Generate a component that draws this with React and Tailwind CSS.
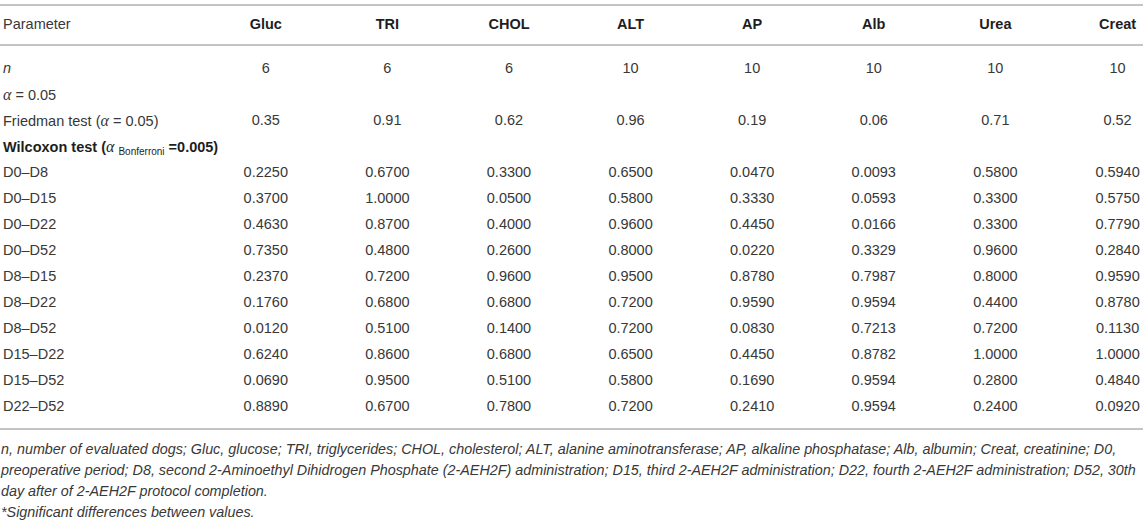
const cols = ['Gluc', 'TRI', 'CHOL', 'ALT', 'AP', 'Alb', 'Urea', 'Creat'];

const rows = [
  ['D0–D8', '0.2250', '0.6700', '0.3300', '0.6500', '0.0470', '0.0093', '0.5800', '0.5940'],
  ['D0–D15', '0.3700', '1.0000', '0.0500', '0.5800', '0.3330', '0.0593', '0.3300', '0.5750'],
  ['D0–D22', '0.4630', '0.8700', '0.4000', '0.9600', '0.4450', '0.0166', '0.3300', '0.7790'],
  ['D0–D52', '0.7350', '0.4800', '0.2600', '0.8000', '0.0220', '0.3329', '0.9600', '0.2840'],
  ['D8–D15', '0.2370', '0.7200', '0.9600', '0.9500', '0.8780', '0.7987', '0.8000', '0.9590'],
  ['D8–D22', '0.1760', '0.6800', '0.6800', '0.7200', '0.9590', '0.9594', '0.4400', '0.8780'],
  ['D8–D52', '0.0120', '0.5100', '0.1400', '0.7200', '0.0830', '0.7213', '0.7200', '0.1130'],
  ['D15–D22', '0.6240', '0.8600', '0.6800', '0.6500', '0.4450', '0.8782', '1.0000', '1.0000'],
  ['D15–D52', '0.0690', '0.9500', '0.5100', '0.5800', '0.1690', '0.9594', '0.2800', '0.4840'],
  ['D22–D52', '0.8890', '0.6700', '0.7800', '0.7200', '0.2410', '0.9594', '0.2400', '0.0920'],
];

function Row({ label, values }) {
  return (
    <div className="grid grid-cols-[205px_repeat(7,121.6px)_1fr] items-center h-[26px]">
      <div className="pl-[3px] whitespace-nowrap">{label}</div>
      {values.map((v, i) => (
        <div key={i} className={`text-center ${i === 7 ? 'pl-[36px]' : ''}`}>
          {v}
        </div>
      ))}
    </div>
  );
}

const empty = ['', '', '', '', '', '', '', ''];

export default function App() {
  return (
    <div className="w-[1146px] h-[521px] bg-white text-[#383838] text-[14.5px] font-['Liberation_Sans',Arial,sans-serif] overflow-hidden">
      <div className="w-[1143px] pt-[4px]">
        <div className="border-t-2 border-b-2 border-[#c4c4c4]">
          <div className="grid grid-cols-[205px_repeat(7,121.6px)_1fr] items-center h-[38px]">
            <div className="pl-[3px]">Parameter</div>
            {cols.map((c, i) => (
              <div key={c} className={`text-center font-bold text-[#1e1e1e] ${i === 7 ? 'pl-[36px]' : ''}`}>
                {c}
              </div>
            ))}
          </div>
        </div>
        <div className="pt-[10px] pb-[8px] border-b-2 border-[#c4c4c4]">
          <Row label={<i>n</i>} values={['6', '6', '6', '10', '10', '10', '10', '10']} />
          <Row
            label={
              <span>
                <i className="font-['Liberation_Serif',serif] text-[16px]">α</i> = 0.05
              </span>
            }
            values={empty}
          />
          <Row
            label={
              <span>
                Friedman test (<i className="font-['Liberation_Serif',serif] text-[16px]">α</i> = 0.05)
              </span>
            }
            values={['0.35', '0.91', '0.62', '0.96', '0.19', '0.06', '0.71', '0.52']}
          />
          <Row
            label={
              <span className="font-bold text-[#1e1e1e]">
                Wilcoxon test (<i className="font-['Liberation_Serif',serif] font-normal text-[16px]">α</i>{' '}
                <sub className="font-normal text-[10px]">Bonferroni</sub> =0.005)
              </span>
            }
            values={empty}
          />
          {rows.map((r) => (
            <Row key={r[0]} label={r[0]} values={r.slice(1)} />
          ))}
        </div>
        <div className="pt-[9px] pl-[1px] italic text-[14.35px] leading-[21px] text-[#383838]">
          <p>
            n, number of evaluated dogs; Gluc, glucose; TRI, triglycerides; CHOL, cholesterol; ALT, alanine aminotransferase; AP, alkaline phosphatase; Alb, albumin; Creat, creatinine; D0,
            preoperative period; D8, second 2-Aminoethyl Dihidrogen Phosphate (2-AEH2F) administration; D15, third 2-AEH2F administration; D22, fourth 2-AEH2F administration; D52, 30th
            day after of 2-AEH2F protocol completion.
          </p>
          <p>*Significant differences between values.</p>
        </div>
      </div>
    </div>
  );
}
